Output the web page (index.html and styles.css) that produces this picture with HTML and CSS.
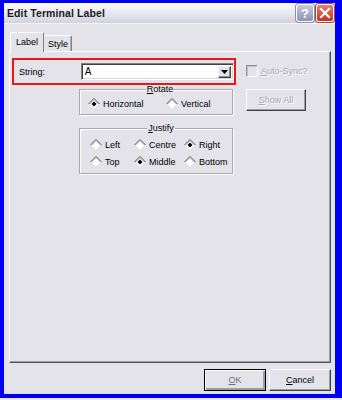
FILE: index.html
```html
<!DOCTYPE html>
<html>
<head>
<meta charset="utf-8">
<link rel="stylesheet" href="styles.css">
</head>
<body>
<div class="window">
  <div class="titlebar">
    <span class="title">Edit Terminal Label</span>
    <div class="tbtns">
      <span class="tbtn help">?</span>
      <span class="tbtn close"><svg width="12" height="12" viewBox="0 0 12 12"><path d="M2 2 L10 10 M10 2 L2 10" stroke="#fff" stroke-width="2.2" stroke-linecap="square"/></svg></span>
    </div>
  </div>
  <div class="client">
    <div class="tabs">
      <div class="tab active">Label</div>
      <div class="tab">Style</div>
    </div>
    <div class="panel">
      <div class="leftcol">
        <div class="stringbox">
          <span class="lbl">String:</span>
          <div class="combo">
            <span class="val">A</span>
            <span class="ddbtn"><svg width="7" height="4" viewBox="0 0 7 4"><path d="M0 0 H7 L3.5 4 Z" fill="#000"/></svg></span>
          </div>
        </div>
        <fieldset class="group rotate">
          <legend><u>R</u>otate</legend>
          <div class="radios r2">
            <label class="radio"><svg class="dia" width="12" height="12" viewBox="0 0 12 12"><polygon points="6,0.5 11.5,6 6,11.5 0.5,6" fill="#fff"/><path d="M0.5 6 L6 0.5 L11.5 6" stroke="#555" fill="none"/><path d="M1.5 6 L6 1.5 L10.5 6" stroke="#999" fill="none"/><path d="M0.5 6 L6 11.5 L11.5 6" stroke="#d8d8dc" fill="none"/><polygon points="6,3.5 8.5,6 6,8.5 3.5,6" fill="#000"/></svg>Horizontal</label>
            <label class="radio"><svg class="dia" width="12" height="12" viewBox="0 0 12 12"><polygon points="6,0.5 11.5,6 6,11.5 0.5,6" fill="#fff"/><path d="M0.5 6 L6 0.5 L11.5 6" stroke="#555" fill="none"/><path d="M1.5 6 L6 1.5 L10.5 6" stroke="#999" fill="none"/><path d="M0.5 6 L6 11.5 L11.5 6" stroke="#d8d8dc" fill="none"/></svg>Vertical</label>
          </div>
        </fieldset>
        <fieldset class="group justify">
          <legend><u>J</u>ustify</legend>
          <div class="radios r3">
            <label class="radio"><svg class="dia" width="12" height="12" viewBox="0 0 12 12"><polygon points="6,0.5 11.5,6 6,11.5 0.5,6" fill="#fff"/><path d="M0.5 6 L6 0.5 L11.5 6" stroke="#555" fill="none"/><path d="M1.5 6 L6 1.5 L10.5 6" stroke="#999" fill="none"/><path d="M0.5 6 L6 11.5 L11.5 6" stroke="#d8d8dc" fill="none"/></svg>Left</label>
            <label class="radio"><svg class="dia" width="12" height="12" viewBox="0 0 12 12"><polygon points="6,0.5 11.5,6 6,11.5 0.5,6" fill="#fff"/><path d="M0.5 6 L6 0.5 L11.5 6" stroke="#555" fill="none"/><path d="M1.5 6 L6 1.5 L10.5 6" stroke="#999" fill="none"/><path d="M0.5 6 L6 11.5 L11.5 6" stroke="#d8d8dc" fill="none"/></svg>Centre</label>
            <label class="radio"><svg class="dia" width="12" height="12" viewBox="0 0 12 12"><polygon points="6,0.5 11.5,6 6,11.5 0.5,6" fill="#fff"/><path d="M0.5 6 L6 0.5 L11.5 6" stroke="#555" fill="none"/><path d="M1.5 6 L6 1.5 L10.5 6" stroke="#999" fill="none"/><path d="M0.5 6 L6 11.5 L11.5 6" stroke="#d8d8dc" fill="none"/><polygon points="6,3.5 8.5,6 6,8.5 3.5,6" fill="#000"/></svg>Right</label>
            <label class="radio"><svg class="dia" width="12" height="12" viewBox="0 0 12 12"><polygon points="6,0.5 11.5,6 6,11.5 0.5,6" fill="#fff"/><path d="M0.5 6 L6 0.5 L11.5 6" stroke="#555" fill="none"/><path d="M1.5 6 L6 1.5 L10.5 6" stroke="#999" fill="none"/><path d="M0.5 6 L6 11.5 L11.5 6" stroke="#d8d8dc" fill="none"/></svg>Top</label>
            <label class="radio"><svg class="dia" width="12" height="12" viewBox="0 0 12 12"><polygon points="6,0.5 11.5,6 6,11.5 0.5,6" fill="#fff"/><path d="M0.5 6 L6 0.5 L11.5 6" stroke="#555" fill="none"/><path d="M1.5 6 L6 1.5 L10.5 6" stroke="#999" fill="none"/><path d="M0.5 6 L6 11.5 L11.5 6" stroke="#d8d8dc" fill="none"/><polygon points="6,3.5 8.5,6 6,8.5 3.5,6" fill="#000"/></svg>Middle</label>
            <label class="radio"><svg class="dia" width="12" height="12" viewBox="0 0 12 12"><polygon points="6,0.5 11.5,6 6,11.5 0.5,6" fill="#fff"/><path d="M0.5 6 L6 0.5 L11.5 6" stroke="#555" fill="none"/><path d="M1.5 6 L6 1.5 L10.5 6" stroke="#999" fill="none"/><path d="M0.5 6 L6 11.5 L11.5 6" stroke="#d8d8dc" fill="none"/></svg>Bottom</label>
          </div>
        </fieldset>
      </div>
      <div class="rightcol">
        <div class="check"><span class="cbox"></span><span class="dis"><u>A</u>uto-Sync?</span></div>
        <div class="btn showall"><span class="dis"><u>S</u>how All</span></div>
      </div>
    </div>
    <div class="footer">
      <div class="btn default"><span class="dim"><u>O</u>K</span></div>
      <div class="btn"><span><u>C</u>ancel</span></div>
    </div>
  </div>
</div>
</body>
</html>
```

FILE: styles.css
```css
* { box-sizing: border-box; }
html, body { margin: 0; padding: 0; background: #e8e8ee; }
body { width: 342px; height: 400px; overflow: hidden; font-family: "Liberation Sans", Arial, sans-serif; font-size: 9px; color: #000; }

.window {
  width: 342px; height: 398px;
  border-style: solid; border-color: #0000f4;
  border-width: 3px 7px 4px 4px;
  background: #e3e3e9;
  display: flex; flex-direction: column;
}

.titlebar {
  height: 21px; flex: none;
  display: flex; align-items: center; justify-content: space-between;
  padding: 0 1px 0 3px;
  background: linear-gradient(#fbfbfd, #e6e6ee 55%, #d2d2dc);
  border-bottom: 1px solid #f4f4f8;
}
.title { font-weight: bold; font-size: 10.5px; letter-spacing: 0.1px; color: #1a1a1a; }
.tbtns { display: flex; gap: 2px; }
.tbtn {
  width: 18px; height: 18px; border-radius: 3px;
  display: flex; align-items: center; justify-content: center;
  border: 1px solid #fff;
}
.help {
  background: linear-gradient(#c6cadc, #8e94b4);
  color: #fff; font-weight: bold; font-size: 13px; font-family: "Liberation Sans", sans-serif;
  box-shadow: 0 0 0 1px #8a8ea8;
}
.close {
  background: linear-gradient(#e9806e, #c8321e);
  box-shadow: 0 0 0 1px #a84838;
}

.client { flex: 1; display: flex; flex-direction: column; padding: 7px 4px 0 5px; }

.tabs { display: flex; height: 20px; align-items: flex-end; padding-left: 1px; position: relative; z-index: 1; }
.tab {
  font-size: 9px; padding: 0 4px;
  border: 1px solid #fff; border-bottom: none;
  border-right: 1px solid #808080;
  border-radius: 2px 2px 0 0;
  background: #e3e3e9;
}
.tab.active { height: 20px; width: 34px; padding-top: 4px; padding-left: 5px; margin-bottom: -1px; }
.tab:not(.active) { height: 16px; width: 28px; padding-top: 3px; border-left: none; box-shadow: inset -1px 0 #b0b0b8; }

.panel {
  width: 322px; height: 312px;
  border-top: 1px solid #fff; border-left: 1px solid #fff;
  border-right: 1px solid #505058; border-bottom: 1px solid #505058;
  box-shadow: inset -1px -1px #9c9ca4;
  padding: 6px 0 0 2px;
  display: grid; grid-template-columns: 224px auto; column-gap: 10px; align-items: start;
}

.stringbox {
  width: 224px; height: 27px;
  border: 2px solid #e81818;
  display: flex; align-items: center;
  padding-left: 5px;
}
.lbl { width: 62px; }
.combo {
  width: 154px; height: 17px;
  display: flex; align-items: center; justify-content: space-between;
  background: #fff;
  border-top: 1px solid #808080; border-left: 1px solid #808080;
  border-right: 1px solid #fff; border-bottom: 1px solid #fff;
  box-shadow: inset 1px 1px #404040, inset -1px -1px #d8d8dc;
  padding: 0 2px 0 3px;
}
.val { font-size: 10px; }
.ddbtn {
  width: 13px; height: 12px;
  display: flex; align-items: center; justify-content: center;
  background: #e3e3e9;
  border-top: 1px solid #f4f4f8; border-left: 1px solid #f4f4f8;
  border-right: 1px solid #404040; border-bottom: 1px solid #404040;
  box-shadow: inset -1px -1px #909098;
}

.group {
  margin: 0 0 0 67px; padding: 3px 0 4px 8px;
  width: 154px;
  border: 1px solid #a8a8b0;
  box-shadow: 1px 1px #fff, inset 1px 1px #fff;
}
.group legend { margin: 0 auto; padding: 0 1px; line-height: 11px; font-size: 9px; }
.rotate { margin-top: -1px; }
.justify { margin-top: 8px; padding: 5px 0 5px 10px; }

.radios { display: grid; align-items: center; }
.r2 { grid-template-columns: 78px auto; }
.r3 { grid-template-columns: 44px 50px auto; row-gap: 5px; }
.radio { display: flex; align-items: center; gap: 3px; height: 12px; }
.dia { flex: none; display: block; }

.rightcol { display: flex; flex-direction: column; align-items: flex-start; }
.check { display: flex; align-items: center; gap: 3px; margin-top: 6px; height: 13px; }
.cbox {
  width: 12px; height: 12px;
  border-top: 1px solid #909098; border-left: 1px solid #909098;
  border-right: 1px solid #fff; border-bottom: 1px solid #fff;
  box-shadow: inset 1px 1px #c0c0c8;
}
.dis { color: #a6a6ae; text-shadow: 1px 1px #fff; }

.btn {
  width: 62px; height: 22px;
  display: flex; align-items: center; justify-content: center;
  border-top: 1px solid #fff; border-left: 1px solid #fff;
  border-right: 1px solid #404048; border-bottom: 1px solid #404048;
  box-shadow: inset -1px -1px #9c9ca4;
  background: #e3e3e9;
}
.showall { width: 60px; margin-top: 12px; }
.btn.default { border: 1px solid #000; box-shadow: inset 1px 1px #fff, inset -2px -2px #9c9ca4; }
.dim { color: #707078; }

.footer { display: flex; justify-content: flex-end; gap: 3px; margin-top: 6px; padding-right: 0; }
```
